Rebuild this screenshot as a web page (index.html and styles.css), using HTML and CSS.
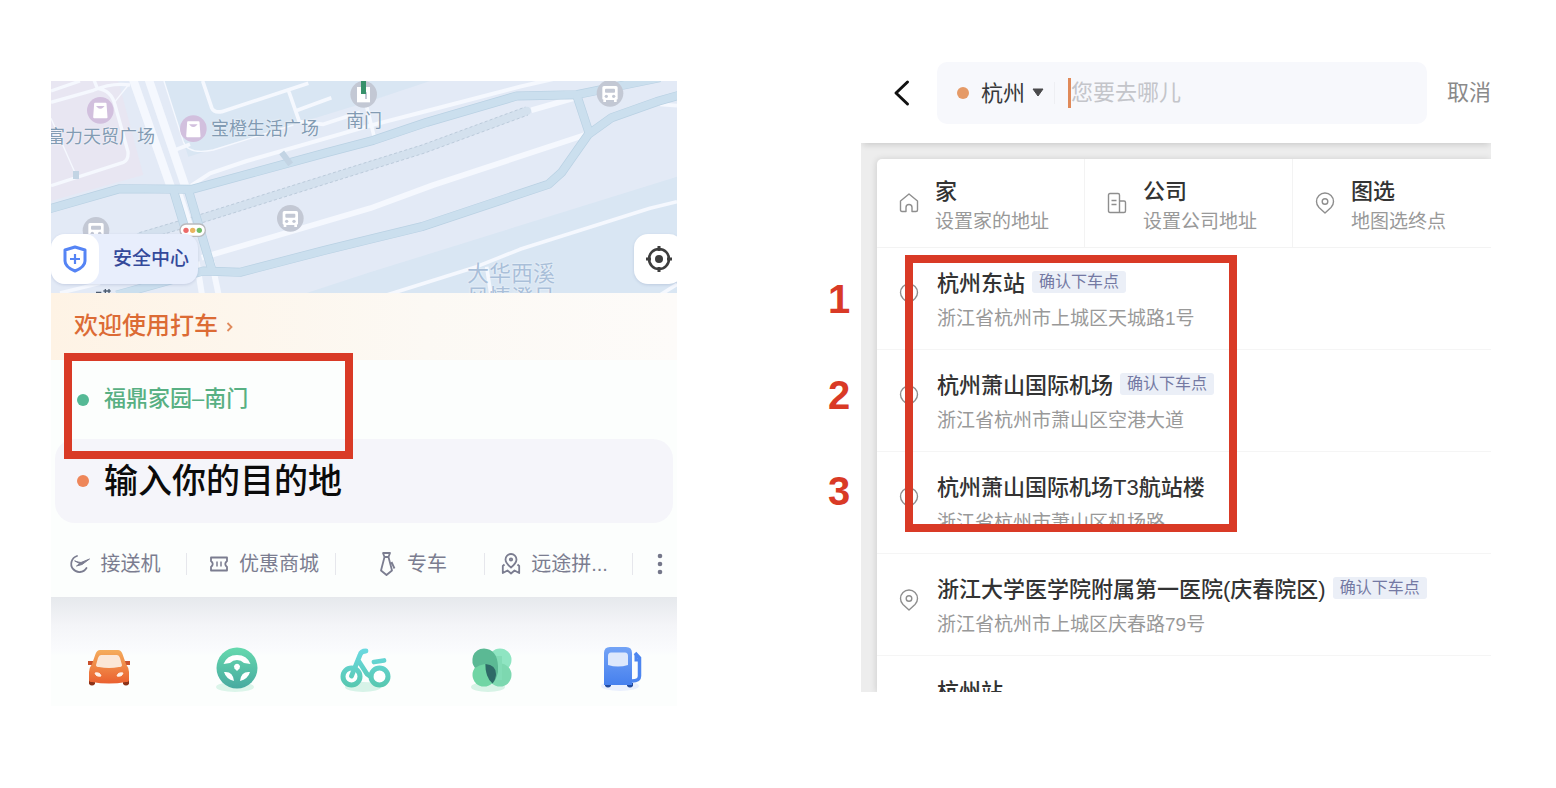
FILE: index.html
```html
<!DOCTYPE html>
<html lang="zh-CN">
<head>
    <meta charset="UTF-8">
    <meta name="viewport" content="width=device-width, initial-scale=1.0">
    <title>打车目的地选择</title>
    <link rel="stylesheet" href="styles.css">
</head>
<body>
    <main class="page">
        <!-- 首页 -->
        <section class="home">
            <div class="map">
                <svg class="map-canvas" viewBox="33 18 1878 636" preserveAspectRatio="xMinYMin slice" aria-hidden="true">
                    <rect x="33" y="18" width="1878" height="636" fill="#e3eaf6"/>
                    <path d="M33 18H235L310 300L33 378Z" fill="#e8e6f2"/>
                    <path d="M372 18L445 245L980 82L1170 18Z" fill="#d9e6f3"/>
                    <path d="M800 654L990 592L1911 305V654Z" fill="#d9e6f3"/>
                    <g fill="none" stroke="#d4e1ee">
                        <path d="M300 485L480 432L990 272L1150 222L1460 108" stroke-width="26" stroke-linecap="round"/>
                        <path d="M298 473L476 420L986 260L1146 210L1456 96M304 497L484 444L994 284L1154 234L1464 120" stroke="#bccbdb" stroke-width="3" stroke-dasharray="9 7"/>
                    </g>
                    <g fill="none" stroke="#f5f8fe" stroke-linejoin="round">
                        <path d="M278 10L392 335M325 10L436 335" stroke-width="25"/>
                        <path d="M415 345L450 450M470 560L486 660M515 560L536 660" stroke-width="18"/>
                        <path d="M485 548L990 400L1180 330L1640 178M1474 106L1600 70" stroke-width="17"/>
                        <path d="M450 334L510 295L620 258L990 152L1160 108L1440 35L1540 12" stroke-width="12"/>
                        <path d="M33 82L160 46Q215 22 270 30M33 48L120 18M160 10L172 40Q215 46 225 90L264 230Q266 256 250 262L33 332" stroke-width="10"/>
                        <path d="M488 18L515 98Q522 114 545 110L805 25M745 45L778 140L850 148L960 112M772 106L874 68M405 225L450 208M980 95L1003 187" stroke-width="11"/>
                        <path d="M33 130L108 300M372 18L430 200Q445 240 520 225L760 150M265 30L225 80" stroke-width="4"/>
                        <path d="M1040 660L1310 575L1440 523L1830 400L1911 380M1340 575L1352 654M1860 88L1911 92M1860 660L1911 628M60 654L180 625" stroke-width="11"/>
                    </g>
                    <g fill="none" stroke-linejoin="round">
                        <g stroke="#b9d1e3" stroke-width="27">
                            <path d="M20 404L240 341L455 343L860 233L1000 196L1160 142L1430 63L1610 59L1860 8M1920 60L1850 80L1715 128L1645 178L1565 292L1525 328L1145 455L960 500L850 527L600 592L490 588L230 660"/>
                            <path d="M1610 60L1648 176M400 345L432 450M445 345L518 592"/>
                        </g>
                        <g stroke="#cbdfee" stroke-width="23">
                            <path d="M20 404L240 341L455 343L860 233L1000 196L1160 142L1430 63L1610 59L1860 8M1920 60L1850 80L1715 128L1645 178L1565 292L1525 328L1145 455L960 500L850 527L600 592L490 588L230 660"/>
                            <path d="M1610 60L1648 176M400 345L432 450M445 345L518 592"/>
                        </g>
                        <path d="M725 232L752 268M108 288V312" stroke="#c3d4e4" stroke-width="18"/>
                    </g>
                    <g fill="#d2c0de">
                        <circle cx="181" cy="106" r="40"/>
                        <circle cx="460" cy="161" r="40"/>
                    </g>
                    <path d="M165 86H197L200 127H162ZM444 141H476L479 184H441Z" fill="#fff" stroke="#fff" stroke-width="5" stroke-linejoin="round"/>
                    <path d="M173 95Q181 103 189 95ZM452 150Q460 158 468 150Z" fill="#d2c0de" stroke="#d2c0de" stroke-width="4"/>
                    <g fill="#c3c8d4">
                        <circle cx="168" cy="466" r="40"/>
                        <circle cx="751" cy="430" r="40"/>
                        <circle cx="1710" cy="55" r="40"/>
                        <circle cx="971" cy="58" r="40"/>
                    </g>
                    <path d="M951 36H990V82H951Z" fill="#fff"/>
                    <path d="M978 52V72" stroke="#c3c8d4" stroke-width="6"/>
                    <rect x="963" y="10" width="15" height="47" fill="#37916b"/>
                    <defs>
                        <g id="train">
                            <rect x="-23" y="-22" width="46" height="42" rx="5" fill="#fff"/>
                            <path d="M-20 20H-12V26H-20ZM12 20H20V26H12Z" fill="#fff"/>
                            <rect x="-15" y="-14" width="30" height="12" rx="3" fill="#c3c8d4"/>
                            <circle cx="-11" cy="9" r="5" fill="#c3c8d4"/>
                            <circle cx="11" cy="9" r="5" fill="#c3c8d4"/>
                        </g>
                    </defs>
                    <use href="#train" x="168" y="466"/>
                    <use href="#train" x="751" y="430"/>
                    <use href="#train" x="1710" y="55"/>
                    <rect x="420" y="447" width="76" height="37" rx="18" fill="#fff" stroke="#b9b9bd" stroke-width="4"/>
                    <circle cx="438" cy="466" r="8" fill="#ec6a69"/>
                    <circle cx="458" cy="466" r="8" fill="#eab45f"/>
                    <circle cx="478" cy="466" r="8" fill="#72bd66"/>
                    <path d="M168 652H184M190 648H212M196 642V656M207 642V656" stroke="#4d5c70" stroke-width="4"/>
                </svg>
                <span class="place place-fuli">富力天贸广场</span>
                <span class="place place-baocheng">宝橙生活广场</span>
                <span class="place place-gate">南门</span>
                <span class="place place-dahua">大华西溪<br>风情澄月</span>

                <button class="safety" type="button">
                    <span class="safety-icon">
                        <svg width="26" height="30" viewBox="0 0 26 30" fill="none" stroke="#5584f5" stroke-linejoin="round">
                            <path d="M13 3L23 6V17Q23 23 13 27Q3 23 3 17V6Z" stroke-width="3"/>
                            <path d="M13 10V20M8 15H18" stroke-width="2.200"/>
                        </svg>
                    </span>
                    安全中心
                </button>
                <button class="locate" type="button" aria-label="定位">
                    <svg width="28" height="28" viewBox="0 0 28 28" fill="none" stroke="#3d3d3d">
                        <circle cx="14" cy="14" r="10" stroke-width="2.600"/>
                        <circle cx="14" cy="14" r="4" fill="#3d3d3d" stroke="none"/>
                        <path d="M14 1V6M14 22V27M1 14H6M22 14H27" stroke-width="3"/>
                    </svg>
                </button>
            </div>

            <a class="welcome" href="#">欢迎使用打车
                <svg width="8" height="12" viewBox="0 0 8 12" fill="none" stroke="#e08a5c" stroke-width="1.800"><path d="M1.500 2L5.500 6L1.500 10"/></svg>
            </a>

            <div class="trip">
                <a class="start" href="#"><i class="dot dot-green"></i>福鼎家园–南门</a>
                <label class="dest">
                    <i class="dot dot-orange"></i>
                    <input type="text" placeholder="输入你的目的地" aria-label="目的地">
                </label>
                <div class="mark mark-start"></div>
            </div>

            <nav class="services">
                <a href="#">
                    <svg width="22" height="22" viewBox="0 0 22 22" fill="none" stroke="#7b7d90" stroke-width="1.800" stroke-linecap="round">
                        <path d="M8 3A8.200 8.200 0 1 0 17.500 15"/>
                        <path d="M6 8L9 9L12 9.500L20.500 6L13 11.500L7.500 13L10.500 10.800Z" fill="#7b7d90" stroke-width="1" stroke-linejoin="round"/>
                    </svg>
                    接送机
                </a>
                <a class="mid" href="#">
                    <svg width="20" height="22" viewBox="0 0 20 22" fill="none" stroke="#7b7d90" stroke-width="1.800" stroke-linejoin="round">
                        <path d="M2 4.500H18V8Q14.500 11 18 14V17.500H2V14Q5.500 11 2 8Z"/>
                        <path d="M8 8.500V13.500M12 8.500V13.500" stroke-width="1.500"/>
                    </svg>
                    优惠商城
                </a>
                <a class="mid" href="#">
                    <svg width="18" height="26" viewBox="0 0 18 26" fill="none" stroke="#7b7d90" stroke-width="1.800" stroke-linejoin="round">
                        <path d="M4 2H11L9.500 6H5.500ZM5.500 6L2 19.500L7.500 24L13 19.500L9.500 6M12.500 11L15.500 17.500"/>
                    </svg>
                    专车
                </a>
                <a href="#">
                    <svg width="20" height="24" viewBox="0 0 20 24" fill="none" stroke="#7b7d90" stroke-width="1.800" stroke-linejoin="round">
                        <path d="M10 15.500Q4.500 11 4.500 7.500A5.500 5.500 0 0 1 15.500 7.500Q15.500 11 10 15.500Z"/>
                        <circle cx="10" cy="7.500" r="1.200"/>
                        <path d="M3.500 12.500L1.800 14V21L6.500 18.500L10 21.500L13.500 18.500L18.200 21V14L16.500 12.500"/>
                    </svg>
                    远途拼...
                </a>
                <button type="button" aria-label="更多">
                    <svg width="6" height="22" viewBox="0 0 6 22" fill="#75778a"><circle cx="3" cy="3" r="2.300"/><circle cx="3" cy="11" r="2.300"/><circle cx="3" cy="19" r="2.300"/></svg>
                </button>
            </nav>

            <nav class="apps">
                <a href="#" aria-label="打车">
                    <svg width="48" height="48" viewBox="0 0 48 48">
                        <defs><linearGradient id="car" x2="0" y2="1"><stop stop-color="#f5ad5d"/><stop offset="1" stop-color="#ea602f"/></linearGradient></defs>
                        <path d="M4 35H10V40Q7 43 4 40ZM38 35H44V40Q41 43 38 40Z" fill="#8c3217"/>
                        <path d="M3 17H8V21H3ZM40 17H45V21H40Z" fill="#c9522d"/>
                        <path d="M15 6H33Q36 6 37.500 10L41 20Q44 24 44 28V36Q44 38 41 38Q24 41 7 38Q4 38 4 36V28Q4 24 7 20L10.500 10Q12 6 15 6Z" fill="url(#car)"/>
                        <path d="M16 11H32Q34 11 35 14L37 21Q37 23 34 23Q24 25 14 23Q11 23 11 21L13 14Q14 11 16 11Z" fill="#fbe7d7"/>
                        <path d="M10 29Q15 28 16 32Q11 33 10 29ZM38 29Q33 28 32 32Q37 33 38 29Z" fill="#fff1e8" stroke="#fff1e8"/>
                    </svg>
                </a>
                <a href="#" aria-label="代驾">
                    <svg width="48" height="48" viewBox="0 0 48 48">
                        <defs><linearGradient id="wheel" x2="0" y2="1"><stop stop-color="#66d9ae"/><stop offset="1" stop-color="#48aaa0"/></linearGradient></defs>
                        <ellipse cx="22" cy="43" rx="19" ry="5" fill="#dcf5ea"/>
                        <circle cx="24" cy="24" r="20.500" fill="url(#wheel)"/>
                        <path d="M10.500 20Q14 11 24 11Q34 11 37.500 20L31 19Q28 16 24 16Q20 16 17 19Z" fill="#fff"/>
                        <path d="M11 28Q20 27 21 37Q13 35 11 28ZM37 28Q28 27 27 37Q35 35 37 28Z" fill="#fff"/>
                        <path d="M24 27L21.500 24.500A3 3 0 1 1 26.500 24.500Z" fill="#fff"/>
                    </svg>
                </a>
                <a href="#" aria-label="骑行">
                    <svg class="bike" width="52" height="48" viewBox="1 0 52 48" fill="none">
                        <defs><linearGradient id="bike" gradientUnits="userSpaceOnUse" x1="0" y1="4" x2="0" y2="44"><stop stop-color="#6bdae2"/><stop offset="1" stop-color="#57c7ae"/></linearGradient></defs>
                        <ellipse cx="24" cy="43" rx="18" ry="5" fill="#d7f3e8"/>
                        <circle cx="12.500" cy="32.500" r="8.500" fill="#fff" stroke="url(#bike)" stroke-width="5"/>
                        <circle cx="40.500" cy="32.500" r="8.500" fill="#fff" stroke="url(#bike)" stroke-width="5"/>
                        <path d="M12.500 32L21 11Q22 7 27 7M19 16L28 30Q30 32 32 32M35 18L45 16.500" stroke="url(#bike)" stroke-width="4.800" stroke-linecap="round"/>
                    </svg>
                </a>
                <a href="#" aria-label="绿色出行">
                    <svg width="48" height="48" viewBox="3 0 48 48">
                        <ellipse cx="21" cy="43" rx="17" ry="5" fill="#d7f3e6"/>
                        <circle cx="33" cy="16" r="11.500" fill="#8fe5c2"/>
                        <circle cx="33" cy="31" r="11.500" fill="#7dd8b0"/>
                        <path d="M22 12H35V36H22Z" fill="#82dcb6"/>
                        <circle cx="17" cy="31" r="11.500" fill="#70d5a4"/>
                        <path d="M17 4.500Q30 5 31 22V28Q29 36 26 39Q19 34 18 20Q12 21 8 24Q4 19 6 12Q9 4.500 17 4.500Z" fill="#5bb994"/>
                        <path d="M18.500 20Q29 21 29 30Q29 35 25.500 39.500Q18 33 18.500 20Z" fill="#2e6a67"/>
                    </svg>
                </a>
                <a href="#" aria-label="加油">
                    <svg width="48" height="48" viewBox="0 0 48 48" fill="none">
                        <defs><linearGradient id="gas" x2="0" y2="1"><stop stop-color="#73a3f6"/><stop offset="1" stop-color="#4680ee"/></linearGradient></defs>
                        <ellipse cx="22" cy="42" rx="19" ry="5" fill="#eaf0fd"/>
                        <path d="M7 39H13V42Q10 45 7 42ZM29 39H35V42Q32 45 29 42Z" fill="#244c9e"/>
                        <path d="M12 3H28Q34 3 34 9V41H6V9Q6 3 12 3Z" fill="url(#gas)"/>
                        <path d="M13 8.500H27Q30 8.500 30 12V21Q20 24 10 21V12Q10 8.500 13 8.500Z" fill="#dde8fc"/>
                        <path d="M37 9L41.500 14V32Q41.500 37 34 37" stroke="#4d86f0" stroke-width="3.500"/>
                        <path d="M38 11V16H42" stroke="#4d86f0" stroke-width="3"/>
                    </svg>
                </a>
            </nav>
        </section>

        <!-- 搜索页 -->
        <section class="search">
            <header class="search-head">
                <button class="back" type="button" aria-label="返回">
                    <svg width="18" height="28" viewBox="0 0 18 28" fill="none" stroke="#111" stroke-width="3" stroke-linecap="round" stroke-linejoin="round"><path d="M14.500 3L3 14L14.500 25"/></svg>
                </button>
                <div class="search-box">
                    <i class="dot dot-sand"></i>
                    <select class="city" aria-label="城市"><option>杭州</option></select>
                    <svg class="caret-down" width="12" height="10" viewBox="0 0 12 10" fill="#4a4a4c"><path d="M1 1H11L6 8Z" stroke="#4a4a4c" stroke-linejoin="round"/></svg>
                    <i class="sep"></i>
                    <input type="text" placeholder="您要去哪儿" aria-label="搜索目的地">
                </div>
                <button class="cancel" type="button">取消</button>
            </header>

            <div class="results">
                <div class="card">
                    <div class="shortcuts">
                        <a href="#">
                            <svg width="20" height="22" viewBox="0 0 20 22" fill="none" stroke="#8e8e8e" stroke-width="1.400" stroke-linejoin="round"><path d="M1.500 9L10 2L18.500 9V18Q18.500 19.500 17 19.500H13V15.500A3 3 0 0 0 7 15.500V19.500H3Q1.500 19.500 1.500 18Z"/></svg>
                            <span><b>家</b><small>设置家的地址</small></span>
                        </a>
                        <a href="#">
                            <svg width="20" height="22" viewBox="0 0 20 22" fill="none" stroke="#8e8e8e" stroke-width="1.400" stroke-linejoin="round"><path d="M3 1.500H11Q12.500 1.500 12.500 3V20.500H3Q1.500 20.500 1.500 19V3Q1.500 1.500 3 1.500ZM12.500 9H17Q18.500 9 18.500 10.500V19Q18.500 20.500 17 20.500H12.500M4.500 8.500H9.500M4.500 12.500H9.500"/></svg>
                            <span><b>公司</b><small>设置公司地址</small></span>
                        </a>
                        <a href="#">
                            <svg width="20" height="22" viewBox="0 0 20 22" fill="none" stroke="#8e8e8e" stroke-width="1.400"><path d="M10 21L4 15.500A8.500 8.500 0 1 1 16 15.500Z" stroke-linejoin="round"/><circle cx="10" cy="9.500" r="2.800"/></svg>
                            <span><b>图选</b><small>地图选终点</small></span>
                        </a>
                    </div>
                    <ul class="places">
                        <li>
                            <svg width="20" height="22" viewBox="0 0 20 22" fill="none" stroke="#8e8e8e" stroke-width="1.400"><path d="M10 21L4 15.500A8.500 8.500 0 1 1 16 15.500Z" stroke-linejoin="round"/><circle cx="10" cy="9.500" r="2.800"/></svg>
                            <div>
                                <h3>杭州东站<em>确认下车点</em></h3>
                                <p>浙江省杭州市上城区天城路1号</p>
                            </div>
                        </li>
                        <li>
                            <svg width="20" height="22" viewBox="0 0 20 22" fill="none" stroke="#8e8e8e" stroke-width="1.400"><path d="M10 21L4 15.500A8.500 8.500 0 1 1 16 15.500Z" stroke-linejoin="round"/><circle cx="10" cy="9.500" r="2.800"/></svg>
                            <div>
                                <h3>杭州萧山国际机场<em>确认下车点</em></h3>
                                <p>浙江省杭州市萧山区空港大道</p>
                            </div>
                        </li>
                        <li>
                            <svg width="20" height="22" viewBox="0 0 20 22" fill="none" stroke="#8e8e8e" stroke-width="1.400"><path d="M10 21L4 15.500A8.500 8.500 0 1 1 16 15.500Z" stroke-linejoin="round"/><circle cx="10" cy="9.500" r="2.800"/></svg>
                            <div>
                                <h3>杭州萧山国际机场T3航站楼</h3>
                                <p>浙江省杭州市萧山区机场路</p>
                            </div>
                        </li>
                        <li>
                            <svg width="20" height="22" viewBox="0 0 20 22" fill="none" stroke="#8e8e8e" stroke-width="1.400"><path d="M10 21L4 15.500A8.500 8.500 0 1 1 16 15.500Z" stroke-linejoin="round"/><circle cx="10" cy="9.500" r="2.800"/></svg>
                            <div>
                                <h3>浙江大学医学院附属第一医院(庆春院区)<em>确认下车点</em></h3>
                                <p>浙江省杭州市上城区庆春路79号</p>
                            </div>
                        </li>
                        <li class="cut">
                            <div>
                                <h3>杭州站</h3>
                            </div>
                        </li>
                    </ul>
                </div>
            </div>

            <div class="mark mark-results"></div>
            <div class="numbers"><span>1</span><span>2</span><span>3</span></div>
        </section>
    </main>
</body>
</html>
```
FILE: styles.css
```css
* {
    box-sizing: border-box;
}
body {
    margin: 0;
    background: #fff;
    font-family: "Liberation Sans", "Noto Sans CJK SC", sans-serif;
    line-height: 1.2;
    color: #333;
}
a {
    color: inherit;
    text-decoration: none;
}
button, input, select {
    font: inherit;
    color: inherit;
    border: none;
    background: none;
    padding: 0;
    margin: 0;
    outline: none;
}
input, select {
    line-height: normal;
}
svg {
    display: block;
    flex: none;
}
.page {
    display: grid;
    grid-template-columns: minmax(0, 626fr) minmax(0, 630fr);
    gap: 184px;
    align-items: start;
    padding: 62px 65px 80px 51px;
}
.dot {
    flex: none;
    width: 12px;
    height: 12px;
    border-radius: 50%;
}
.dot-green { background: #55b995; }
.dot-orange { background: #ee8659; }
.dot-sand { background: #e59a67; }

/* 红框标注 */
.mark {
    position: absolute;
    border: 8px solid #d93a26;
    pointer-events: none;
}
.mark-start {
    left: 13px;
    top: -7px;
    width: 289px;
    height: 106px;
}
.mark-results {
    left: 44px;
    top: 193px;
    width: 332px;
    height: 277px;
}
.numbers {
    position: absolute;
    left: -33px;
    top: 213px;
    display: grid;
    grid-auto-rows: 96px;
    font-size: 40px;
    font-weight: bold;
    line-height: 48px;
    color: #d93a26;
}

/* 首页 */
.home {
    margin-top: 19px;
    background: #fcfefd;
    overflow: hidden;
}
.map {
    position: relative;
    height: 212px;
    overflow: hidden;
}
.map-canvas {
    width: 100%;
    height: 100%;
}
.place {
    position: absolute;
    font-size: 18px;
    line-height: 24px;
    color: #829bb3;
    white-space: nowrap;
    text-shadow: 0 0 2px #fff;
}
.place-fuli { left: -4px; top: 44px; }
.place-baocheng { left: 160px; top: 36px; }
.place-gate { left: 295px; top: 28px; }
.place-dahua {
    left: 416px;
    top: 181px;
    font-size: 22px;
    color: #a9bfd9;
}
.safety {
    position: absolute;
    left: 0;
    top: 153px;
    display: flex;
    align-items: center;
    gap: 14px;
    height: 50px;
    padding-right: 9px;
    border-radius: 14px;
    background: #e8eefc;
    box-shadow: 0 1px 3px rgba(80, 100, 150, 0.2);
    font-size: 19px;
    font-weight: 500;
    color: #34499a;
}
.safety-icon {
    display: flex;
    align-items: center;
    justify-content: center;
    width: 48px;
    height: 50px;
    border-radius: 14px;
    background: #fff;
}
.locate {
    position: absolute;
    right: -6px;
    top: 153px;
    display: flex;
    align-items: center;
    justify-content: center;
    width: 49px;
    height: 50px;
    border-radius: 14px;
    background: #fff;
    box-shadow: 0 1px 3px rgba(80, 100, 150, 0.2);
}
.welcome {
    display: flex;
    align-items: center;
    gap: 8px;
    height: 67px;
    padding-left: 23px;
    background: linear-gradient(90deg, #fef3e5, #fcf9f4 60%, #fdfbf9);
    font-size: 24px;
    font-weight: 500;
    color: #dc6b35;
}
.trip {
    position: relative;
    padding: 0 4px;
}
.start, .dest {
    display: flex;
    align-items: center;
    gap: 15px;
    padding-left: 22px;
}
.start {
    height: 79px;
    font-size: 22px;
    font-weight: 500;
    color: #58b083;
}
.dest {
    height: 84px;
    border-radius: 20px;
    background: #f5f5fa;
    font-size: 34px;
    font-weight: 500;
    color: #111;
}
.dest input {
    flex: 1;
    min-width: 0;
}
.dest input::placeholder {
    color: #0b0b0b;
    opacity: 1;
}
.services {
    display: grid;
    grid-template-columns: 136fr 149fr 149fr 148fr 44fr;
    align-items: center;
    height: 74px;
    padding-top: 8px;
    font-size: 20px;
    line-height: 22px;
    color: #7b7d90;
}
.services a {
    display: flex;
    align-items: center;
    justify-content: center;
    gap: 10px;
    height: 22px;
    padding-right: 8px;
    border-right: 1px solid #e6e7ec;
    white-space: nowrap;
}
.services .mid {
    padding: 0 0 0 6px;
}
.services button {
    justify-self: center;
    padding-left: 10px;
}
.apps {
    display: flex;
    justify-content: space-between;
    height: 109px;
    padding: 46px 31px 0 34px;
    border-top: 1px solid #e6e8ec;
    background: linear-gradient(#e6e9ed, #f4f5f8 28px, #fafbfd 52px, #fcfefd 58px);
}
.bike {
    margin: 0 -2px;
}

/* 搜索页 */
.search {
    position: relative;
}
.search-head {
    position: relative;
    display: flex;
    align-items: center;
    padding: 0 0 19px 32px;
    background: #fff;
    box-shadow: 0 4px 6px -2px rgba(0, 0, 0, 0.14);
    clip-path: inset(0 0 -12px 0);
    font-size: 22px;
}
.back {
    width: 44px;
}
.search-box {
    flex: 1;
    min-width: 0;
    display: flex;
    align-items: center;
    height: 62px;
    padding-left: 20px;
    border-radius: 10px;
    background: #f7f8fc;
}
.city {
    appearance: none;
    width: 46px;
    margin-left: 12px;
    color: #38383a;
}
.caret-down {
    margin: 0 10px 0 5px;
}
.sep {
    width: 1px;
    height: 22px;
    background: #eeeff3;
}
.search-box input {
    flex: 1;
    min-width: 0;
    height: 30px;
    margin-left: 13px;
    border-left: 3px solid #e08a5a;
}
.search-box input::placeholder {
    color: #c4c5ca;
    opacity: 1;
}
.cancel {
    width: 64px;
    padding-left: 20px;
    color: #8a8a8a;
    white-space: nowrap;
}
.results {
    padding: 16px 0 0 16px;
    background: #ededed;
}
.card {
    background: #fff;
    border-radius: 5px 0 0 0;
    box-shadow: -1px 0 6px rgba(0, 0, 0, 0.12);
    clip-path: inset(-6px 0 0 -12px);
}
.shortcuts {
    display: grid;
    grid-template-columns: 208fr 208fr 198fr;
    height: 89px;
    border-bottom: 1px solid #f3f3f3;
}
.shortcuts a {
    display: flex;
    align-items: center;
    gap: 16px;
    padding-left: 22px;
    border-right: 1px solid #f3f3f3;
    white-space: nowrap;
}
.shortcuts a:last-child {
    border-right: none;
}
.shortcuts span {
    padding-top: 8px;
}
.shortcuts b {
    display: block;
    font-size: 22px;
    font-weight: 500;
    line-height: 30px;
}
.shortcuts small {
    display: block;
    font-size: 19px;
    line-height: 30px;
    color: #999;
}
.places {
    list-style: none;
    margin: 0;
    padding: 0;
}
.places li {
    display: flex;
    align-items: flex-start;
    gap: 18px;
    height: 102px;
    padding: 18px 0 0 22px;
    border-bottom: 1px solid #f5f5f5;
    white-space: nowrap;
}
.places svg {
    margin-top: 17px;
}
.places h3 {
    display: flex;
    align-items: center;
    gap: 7px;
    margin: 0;
    font-size: 22px;
    font-weight: 500;
    line-height: 35px;
}
.places em {
    height: 22px;
    margin-bottom: 4px;
    padding: 0 7px;
    border-radius: 3px;
    background: #ebeff7;
    font-size: 16px;
    font-style: normal;
    font-weight: 400;
    line-height: 22px;
    color: #7479a3;
}
.places p {
    margin: 0;
    font-size: 19px;
    line-height: 35px;
    color: #999;
}
.places .cut {
    height: 36px;
    padding-left: 60px;
    border-bottom: none;
    overflow: hidden;
}
```
